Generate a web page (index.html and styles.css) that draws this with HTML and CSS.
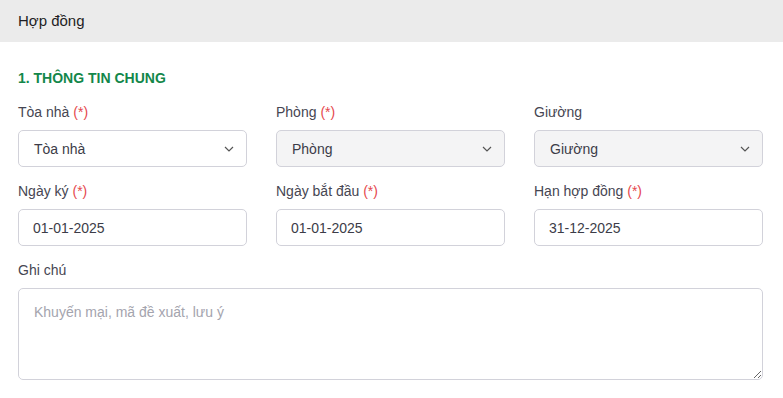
FILE: index.html
```html
<!DOCTYPE html>
<html lang="vi">
<head>
  <meta charset="UTF-8" />
  <meta name="viewport" content="width=device-width, initial-scale=1.0"/>
  <title>Hợp đồng</title>
  <link rel="stylesheet" href="styles.css">
</head>
<body>
  <header class="page-header">Hợp đồng</header>
  <main class="contract-form">
    <h2 class="section-title">1. THÔNG TIN CHUNG</h2>
    <div class="form-grid">
      <div class="field">
        <label class="field-label">Tòa nhà <span class="req">(*)</span></label>
        <div class="select-box">
          <span>Tòa nhà</span>
          <svg class="chevron" width="10" height="6" viewBox="0 0 10 6"><path d="M1 1l4 4 4-4" fill="none" stroke="#555" stroke-width="1.2"/></svg>
        </div>
      </div>
      <div class="field">
        <label class="field-label">Phòng <span class="req">(*)</span></label>
        <div class="select-box disabled">
          <span>Phòng</span>
          <svg class="chevron" width="10" height="6" viewBox="0 0 10 6"><path d="M1 1l4 4 4-4" fill="none" stroke="#555" stroke-width="1.2"/></svg>
        </div>
      </div>
      <div class="field">
        <label class="field-label">Giường</label>
        <div class="select-box disabled">
          <span>Giường</span>
          <svg class="chevron" width="10" height="6" viewBox="0 0 10 6"><path d="M1 1l4 4 4-4" fill="none" stroke="#555" stroke-width="1.2"/></svg>
        </div>
      </div>
      <div class="field">
        <label class="field-label">Ngày ký <span class="req">(*)</span></label>
        <input class="text-input" type="text" value="01-01-2025">
      </div>
      <div class="field">
        <label class="field-label">Ngày bắt đầu <span class="req">(*)</span></label>
        <input class="text-input" type="text" value="01-01-2025">
      </div>
      <div class="field">
        <label class="field-label">Hạn hợp đồng <span class="req">(*)</span></label>
        <input class="text-input" type="text" value="31-12-2025">
      </div>
    </div>
    <div class="field note-field">
      <label class="field-label">Ghi chú</label>
      <textarea class="note-input" placeholder="Khuyến mại, mã đề xuất, lưu ý"></textarea>
    </div>
  </main>
</body>
</html>
```

FILE: styles.css
```css
* { margin:0; padding:0; box-sizing:border-box; }
body { font-family:'Liberation Sans',Arial,sans-serif; background:#fff; color:#3c3c48; overflow:hidden; }
.page-header { height:42px; background:#ebebeb; color:#1e1e24; font-size:15px; line-height:42px; padding:0 18px; }
.contract-form { padding:26px 20px 0 18px; }
.section-title { font-size:14px; line-height:20px; font-weight:bold; color:#13874a; margin-bottom:15px; }
.form-grid { display:grid; grid-template-columns:repeat(3,1fr); column-gap:29px; row-gap:15px; }
.field { display:flex; flex-direction:column; gap:9px; }
.field-label { font-size:14px; line-height:18px; color:#464652; }
.req { color:#e5484d; }
.select-box, .text-input { height:37px; border:1px solid #d2d2da; border-radius:5px; background:#fff; font-size:14px; color:#3c3c48; font-family:inherit; }
.select-box { display:flex; align-items:center; justify-content:space-between; padding:0 12px 0 15px; }
.select-box.disabled { background:#f4f4f5; }
.chevron { display:block; }
.text-input { width:100%; padding:0 14px; outline:none; }
.note-field { margin-top:15px; }
.note-input { width:100%; height:92px; border:1px solid #d2d2da; border-radius:5px; padding:14px 15px; font-size:14px; line-height:18px; font-family:inherit; color:#3c3c48; resize:vertical; outline:none; }
.note-input::placeholder { color:#a4a4ae; }
```
